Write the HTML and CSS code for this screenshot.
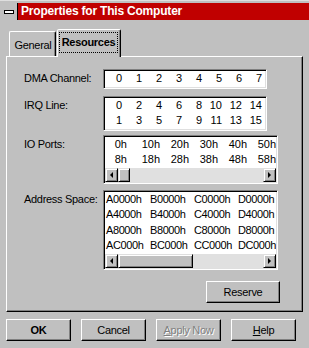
FILE: index.html
```html
<!DOCTYPE html>
<html lang="en">
<head>
    <meta charset="UTF-8">
    <meta name="viewport" content="width=device-width, initial-scale=1.0">
    <title>Properties for This Computer</title>
    <link rel="stylesheet" href="styles.css">
</head>
<body>
    <div class="window">
        <div class="titlebar">
            <div class="sysmenu"><span class="sysbar"></span></div>
            <div class="title">Properties for This Computer</div>
        </div>

        <div class="tabs">
            <div class="tab">General</div>
            <div class="tab active"><span class="focus">Resources</span></div>
        </div>

        <div class="panel">
            <div class="field">
                <div class="label">DMA Channel:</div>
                <div class="list short">
                    <div class="cols num-cols">
                        <span>0</span><span>1</span><span>2</span><span>3</span>
                        <span>4</span><span>5</span><span>6</span><span>7</span>
                    </div>
                </div>
            </div>

            <div class="field irq">
                <div class="label">IRQ Line:</div>
                <div class="list short">
                    <div class="cols num-cols">
                        <span>0</span><span>2</span><span>4</span><span>6</span>
                        <span>8</span><span>10</span><span>12</span><span>14</span>
                        <span>1</span><span>3</span><span>5</span><span>7</span>
                        <span>9</span><span>11</span><span>13</span><span>15</span>
                    </div>
                </div>
            </div>

            <div class="field io">
                <div class="label">IO Ports:</div>
                <div class="list wide">
                    <div class="view">
                        <div class="cols io-cols">
                            <span>0h</span><span>10h</span><span>20h</span>
                            <span>30h</span><span>40h</span><span>50h</span>
                            <span>8h</span><span>18h</span><span>28h</span>
                            <span>38h</span><span>48h</span><span>58h</span>
                        </div>
                    </div>
                    <div class="hscroll">
                        <div class="sbtn left"><i></i></div>
                        <div class="track"><div class="thumb thumb-small"></div></div>
                        <div class="sbtn right"><i></i></div>
                    </div>
                </div>
            </div>

            <div class="field addr">
                <div class="label">Address Space:</div>
                <div class="list wide">
                    <div class="view">
                        <div class="cols addr-cols">
                            <span>A0000h</span><span>B0000h</span><span>C0000h</span><span>D0000h</span>
                            <span>A4000h</span><span>B4000h</span><span>C4000h</span><span>D4000h</span>
                            <span>A8000h</span><span>B8000h</span><span>C8000h</span><span>D8000h</span>
                            <span>AC000h</span><span>BC000h</span><span>CC000h</span><span>DC000h</span>
                        </div>
                    </div>
                    <div class="hscroll">
                        <div class="sbtn left"><i></i></div>
                        <div class="track"><div class="thumb thumb-wide"></div></div>
                        <div class="sbtn right"><i></i></div>
                    </div>
                </div>
            </div>

            <div class="actions">
                <button class="btn reserve">Reserve</button>
            </div>
        </div>

        <div class="buttons">
            <button class="btn default">OK</button>
            <button class="btn">Cancel</button>
            <button class="btn disabled"><u>A</u>pply Now</button>
            <button class="btn"><u>H</u>elp</button>
        </div>
    </div>
</body>
</html>
```

FILE: styles.css
```css
* {
    box-sizing: border-box;
}

body {
    margin: 0;
    background-color: #c0c0c0;
    font-family: "Liberation Sans", Arial, sans-serif;
    font-size: 11px;
    color: #000;
}

.window {
    width: 309px;
    height: 348px;
    overflow: hidden;
    border-top: 1px solid #dfdfdf;
    padding-top: 2px;
    letter-spacing: -0.3px;
}

/* title bar */
.titlebar {
    display: flex;
    height: 17px;
    background-color: #c00000;
    color: #fff;
}

.sysmenu {
    width: 18px;
    height: 17px;
    display: flex;
    align-items: center;
    justify-content: center;
    background-color: #c0c0c0;
    border-right: 1px solid #000;
}

.sysbar {
    width: 10px;
    height: 4px;
    border: 1px solid #000;
    background-color: #fff;
}

.title {
    padding-left: 3px;
    font-size: 12px;
    font-weight: bold;
    line-height: 17px;
    letter-spacing: -0.2px;
}

/* tabs */
.tabs {
    display: flex;
    align-items: flex-end;
    height: 27px;
    margin-top: 9px;
    padding-left: 9px;
}

.tab {
    width: 47px;
    height: 25px;
    padding-top: 6px;
    padding-left: 1px;
    border: 1px solid;
    border-bottom: none;
    border-color: #fff #000 transparent #fff;
    border-radius: 2px 2px 0 0;
    box-shadow: inset -1px 0 #808080;
    text-align: center;
    line-height: 15px;
}

.tab.active {
    position: relative;
    z-index: 1;
    width: 64px;
    height: 28px;
    margin-left: 1px;
    margin-bottom: -1px;
    padding: 2px 2px 0 1px;
    background-color: #c0c0c0;
}

.focus {
    display: block;
    height: 21px;
    border: 1px dotted #000;
    font-weight: bold;
    line-height: 19px;
}

/* property sheet */
.panel {
    width: 297px;
    height: 256px;
    margin-left: 6px;
    padding-top: 12px;
    border: 1px solid;
    border-color: #fff #000 #000 #fff;
    box-shadow: inset -1px -1px #808080;
}

.field {
    display: flex;
    align-items: flex-start;
    margin-left: 17px;
}

.field.irq {
    margin-top: 7px;
}

.field.io {
    margin-top: 4px;
}

.field.addr {
    margin-top: 6px;
}

.label {
    width: 79px;
    padding-top: 2px;
    line-height: 15.5px;
}

.list {
    padding: 1px;
    background-color: #fff;
    border: 1px solid;
    border-color: #808080 #fff #fff #808080;
    box-shadow: inset 1px 1px #000, inset -1px -1px #dfdfdf;
    letter-spacing: 0;
}

.list.short {
    width: 164px;
}

.list.wide {
    width: 175px;
}

.view {
    overflow: hidden;
}

.cols {
    display: grid;
    line-height: 15.5px;
    white-space: nowrap;
}

.num-cols {
    grid-template-columns: repeat(8, 20px);
    text-align: right;
}

.num-cols span {
    padding-right: 3px;
}

.io-cols {
    grid-template-columns: 22px 33px repeat(4, 29px);
    text-align: right;
}

.addr-cols {
    grid-template-columns: repeat(4, 44px);
    letter-spacing: -0.4px;
}

.addr-cols span {
    padding-left: 1px;
}

/* scroll bars */
.hscroll {
    display: flex;
    height: 14px;
}

.track {
    flex: 1;
    display: flex;
    background-color: #e0e0e0;
}

.sbtn,
.thumb {
    background-color: #c0c0c0;
    border: 1px solid;
    border-color: #dfdfdf #000 #000 #dfdfdf;
    box-shadow: inset 1px 1px #fff, inset -1px -1px #808080;
}

.sbtn {
    width: 13px;
    display: flex;
    align-items: center;
    justify-content: center;
}

.sbtn i {
    width: 0;
    height: 0;
    border-top: 3px solid transparent;
    border-bottom: 3px solid transparent;
}

.sbtn.left i {
    border-right: 3px solid #000;
}

.sbtn.right i {
    border-left: 3px solid #000;
}

.thumb-small {
    width: 12px;
}

.thumb-wide {
    width: 75px;
}

/* buttons */
.actions {
    display: flex;
    justify-content: flex-end;
    margin-top: 11px;
    padding-right: 22px;
}

.btn {
    width: 65px;
    height: 22px;
    padding: 0;
    background-color: #c0c0c0;
    border: 1px solid;
    border-color: #fff #000 #000 #fff;
    box-shadow: inset -1px -1px #808080;
    font-family: inherit;
    font-size: 11px;
    letter-spacing: -0.3px;
    line-height: 20px;
    color: #000;
    text-align: center;
}

.btn.reserve {
    width: 74px;
}

.btn.default {
    font-weight: bold;
}

.btn.disabled {
    color: #808080;
    text-shadow: 1px 1px 0 #fff;
}

.buttons {
    display: flex;
    gap: 10px;
    margin: 7px 0 0 6px;
}
```
